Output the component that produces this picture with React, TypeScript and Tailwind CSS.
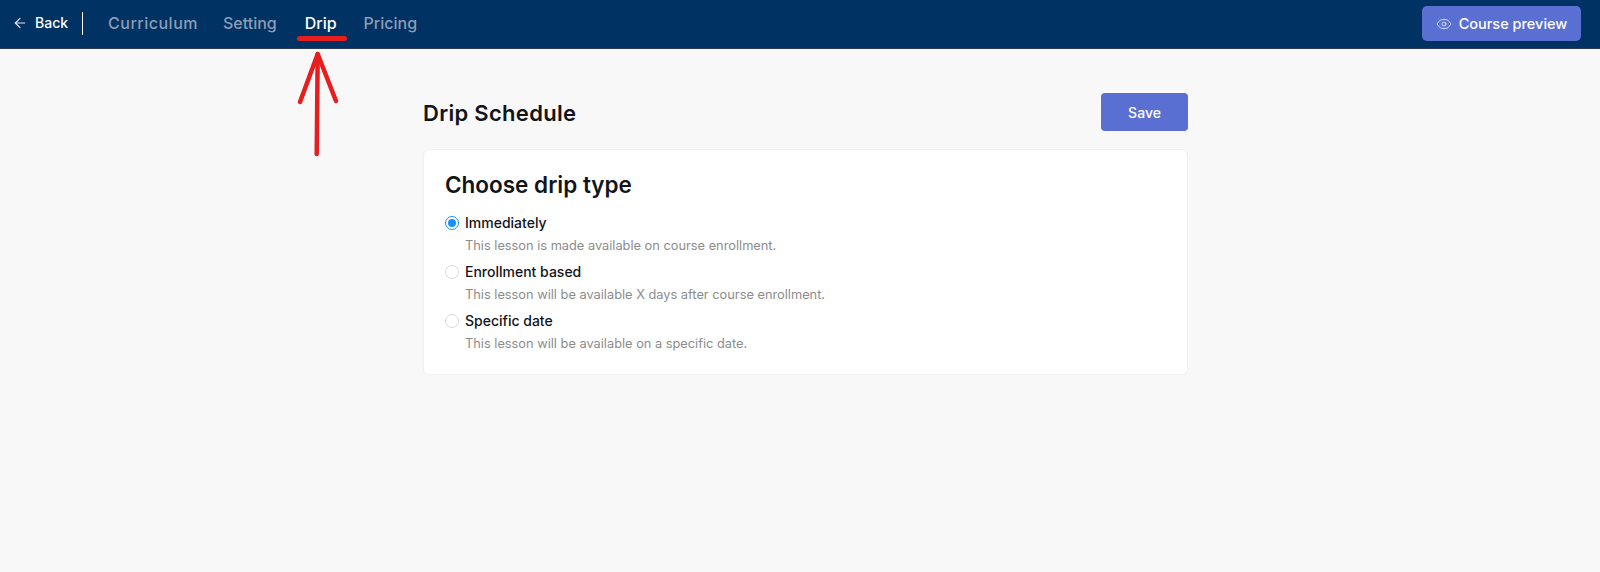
import { ArrowLeft, Eye } from 'lucide-react';

const FONT = "font-['Inter','Liberation_Sans',sans-serif]";

const OPTIONS = [
  { label: 'Immediately', hint: 'This lesson is made available on course enrollment.', checked: true },
  { label: 'Enrollment based', hint: 'This lesson will be available X days after course enrollment.', checked: false },
  { label: 'Specific date', hint: 'This lesson will be available on a specific date.', checked: false },
];

function Radio({ checked }: { checked: boolean }) {
  if (checked) {
    return (
      <span className="flex h-[14px] w-[14px] items-center justify-center rounded-full border border-[#1890ff] bg-white">
        <span className="h-[8px] w-[8px] rounded-full bg-[#1890ff]" />
      </span>
    );
  }
  return <span className="block h-[14px] w-[14px] rounded-full border border-[#d9d9d9] bg-white" />;
}

export default function App() {
  return (
    <div className={`${FONT} relative flex min-h-[572px] flex-col bg-[#f8f8f8]`}>
      <header className="flex h-[49px] items-center justify-between border-b border-[#2b3a5e] bg-[#003264] pr-[19px] pb-[1px] pl-[12px]">
        <nav className="flex items-center">
          <a className="mb-[2px] flex items-center gap-[7px] text-[14px] font-medium text-white">
            <ArrowLeft className="h-[16px] w-[16px] text-[#e6e9f0]" strokeWidth={1.75} />
            Back
          </a>
          <span className="ml-[14px] h-[23px] w-px bg-white" />
          <a className="mb-[2px] ml-[25px] text-[16px] font-medium tracking-[0.5px] text-[#8c9db5]">Curriculum</a>
          <a className="mb-[2px] ml-[25px] text-[16px] font-medium text-[#8c9db5]">Setting</a>
          <a className="mb-[2px] ml-[28px] text-[16px] font-medium text-white">Drip</a>
          <a className="mb-[2px] ml-[27px] text-[16px] font-medium text-[#8c9db5]">Pricing</a>
        </nav>
        <button className="flex h-[35px] w-[159px] items-center justify-center gap-[7px] rounded-[5px] bg-[#5a6fd2] text-[14.5px] font-medium text-white">
          <Eye className="h-[16px] w-[16px] text-[#d5dbf3]" strokeWidth={1.5} />
          Course preview
        </button>
      </header>

      <main className="mt-[44px] ml-[423px] w-[765px]">
        <div className="flex h-[38px] items-center justify-between">
          <h1 className="pt-[2px] text-[22px] font-semibold tracking-[0.3px] text-[#12141a]">Drip Schedule</h1>
          <button className="h-[38px] w-[87px] rounded-[4px] bg-[#5a6fd2] text-[14px] font-medium text-white">Save</button>
        </div>
        <section className="mt-[18px] h-[226px] rounded-[6px] border border-[#f0f0f0] bg-white px-[21px] pt-[20px]">
          <h2 className="text-[22.5px] leading-[30px] font-semibold text-[#12141a]">Choose drip type</h2>
          <ul className="mt-[13px] flex flex-col gap-[7px]">
            {OPTIONS.map(opt => (
              <li key={opt.label} className="flex gap-[6px]">
                <span className="pt-[3px]"><Radio checked={opt.checked} /></span>
                <div>
                  <div className="text-[14px] leading-[20px] font-medium text-[#12141a]">{opt.label}</div>
                  <div className="mt-[3px] text-[12.8px] leading-[19px] text-[#8c8c8c]">{opt.hint}</div>
                </div>
              </li>
            ))}
          </ul>
        </section>
      </main>

      {/* annotation drawn over the screenshot */}
      <span className="absolute top-[36px] left-[297px] h-[5px] w-[50px] rounded-full bg-[#e61e1e]" />
      <svg className="absolute top-[50px] left-[295px]" width="50" height="110" viewBox="0 0 50 110" fill="none" stroke="#e61e1e" strokeWidth="4.5" strokeLinecap="round" strokeLinejoin="round">
        <path d="M21.7 104 L22.7 4" />
        <path d="M5 52 L22.7 4 L41 51" />
      </svg>
    </div>
  );
}
